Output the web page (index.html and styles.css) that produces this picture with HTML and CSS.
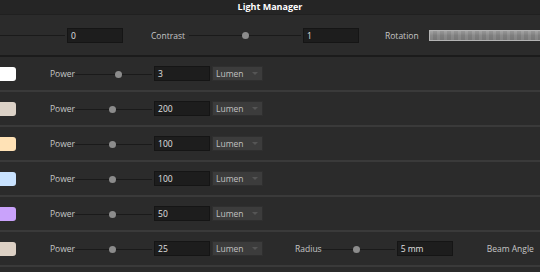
FILE: index.html
```html
<!DOCTYPE html>
<html lang="en">
  <head>
    <meta charset="UTF-8" />
    <title>Light Manager</title>
    <link rel="stylesheet" href="styles.css">
  </head>
  <body>
    <div class="panel">
      <div class="header">Light Manager</div>
      <div class="global-row">
        <div class="slider lead"><span class="track"></span></div>
        <div class="field wide">0</div>
        <span class="label contrast">Contrast</span>
        <div class="slider contrast-slider"><span class="track"></span><span class="thumb" style="left: 53px"></span></div>
        <div class="field wide">1</div>
        <span class="label rotation">Rotation</span>
        <div class="rotation-bar"></div>
      </div>
      <div class="lights">
        <div class="light-row">
          <span class="swatch" style="background: #ffffff"></span>
          <span class="label power">Power</span>
          <div class="slider power-slider"><span class="track"></span><span class="thumb" style="left: 40px"></span></div>
          <div class="field">3</div>
          <div class="unit">Lumen</div>
        </div>
        <div class="light-row">
          <span class="swatch" style="background: #dcd2c7"></span>
          <span class="label power">Power</span>
          <div class="slider power-slider"><span class="track"></span><span class="thumb" style="left: 34px"></span></div>
          <div class="field">200</div>
          <div class="unit">Lumen</div>
        </div>
        <div class="light-row">
          <span class="swatch" style="background: #ffe2b6"></span>
          <span class="label power">Power</span>
          <div class="slider power-slider"><span class="track"></span><span class="thumb" style="left: 34px"></span></div>
          <div class="field">100</div>
          <div class="unit">Lumen</div>
        </div>
        <div class="light-row">
          <span class="swatch" style="background: #c9e2ff"></span>
          <span class="label power">Power</span>
          <div class="slider power-slider"><span class="track"></span><span class="thumb" style="left: 34px"></span></div>
          <div class="field">100</div>
          <div class="unit">Lumen</div>
        </div>
        <div class="light-row">
          <span class="swatch" style="background: #c9a2fb"></span>
          <span class="label power">Power</span>
          <div class="slider power-slider"><span class="track"></span><span class="thumb" style="left: 34px"></span></div>
          <div class="field">50</div>
          <div class="unit">Lumen</div>
        </div>
        <div class="light-row">
          <span class="swatch" style="background: #dcd0c4"></span>
          <span class="label power">Power</span>
          <div class="slider power-slider"><span class="track"></span><span class="thumb" style="left: 34px"></span></div>
          <div class="field">25</div>
          <div class="unit">Lumen</div>
          <span class="label radius">Radius</span>
          <div class="slider radius-slider"><span class="track"></span><span class="thumb" style="left: 31px"></span></div>
          <div class="field">5 mm</div>
          <span class="label beam">Beam Angle</span>
        </div>
      </div>
    </div>
  </body>
</html>
```

FILE: styles.css
```css
body {
  margin: 0;
  background: #2b2b2b;
  font-family: "Open Sans", "Noto Sans", sans-serif;
  font-size: 8.5px;
  color: #c6c6c6;
  overflow: hidden;
}
.panel {
  width: 540px;
  height: 272px;
  overflow: hidden;
}
.header {
  height: 14px;
  line-height: 14px;
  background: #252525;
  border-bottom: 1px solid #202020;
  text-align: center;
  color: #ffffff;
  font-weight: bold;
  font-size: 9px;
}
.global-row {
  display: flex;
  align-items: center;
  height: 40px;
  background: #2b2b2b;
  border-bottom: 2px solid #1b1b1b;
  white-space: nowrap;
}
.label {
  flex: none;
}
.slider {
  position: relative;
  height: 10px;
  flex: none;
}
.track {
  position: absolute;
  left: 0;
  right: 0;
  top: 5px;
  height: 1px;
  background: #1a1a1a;
}
.thumb {
  position: absolute;
  top: 2px;
  width: 7px;
  height: 7px;
  border-radius: 50%;
  background: #8c8c8c;
}
.field {
  flex: none;
  box-sizing: border-box;
  width: 56px;
  height: 15px;
  line-height: 13px;
  padding-left: 3px;
  background: #1d1d1d;
  border: 1px solid #151515;
  color: #e0e0e0;
}
.lead {
  width: 65px;
  margin-right: 2px;
}
.contrast {
  margin-left: 28px;
}
.contrast-slider {
  width: 112px;
  margin-left: 4px;
  margin-right: 2px;
}
.rotation {
  margin-left: 26px;
}
.rotation-bar {
  flex: none;
  width: 112px;
  height: 9px;
  margin-left: 10px;
  border: 1px solid #b4b4b4;
  background:
    repeating-linear-gradient(90deg, rgba(255,255,255,0.05) 0 3px, rgba(0,0,0,0.05) 3px 7px),
    linear-gradient(#a0a0a0, #858585 50%, #7c7c7c);
}
.light-row {
  display: flex;
  align-items: center;
  height: 33px;
  border-bottom: 2px solid #3a3a3a;
  white-space: nowrap;
}
.swatch {
  flex: none;
  width: 20px;
  height: 14px;
  margin-left: -4px;
  border-radius: 3px;
}
.power {
  margin-left: 34px;
}
.power-slider {
  width: 77px;
  margin-right: 2px;
}
.unit {
  flex: none;
  box-sizing: border-box;
  width: 51px;
  height: 15px;
  line-height: 13px;
  margin-left: 2px;
  padding-left: 3px;
  background: #3c3c3c;
  border: 1px solid #2f2f2f;
  color: #c0c0c0;
  position: relative;
}
.unit::after {
  content: "";
  position: absolute;
  right: 4px;
  top: 5px;
  border-left: 3px solid transparent;
  border-right: 3px solid transparent;
  border-top: 3px solid #555;
}
.radius {
  margin-left: 32px;
}
.radius-slider {
  width: 73px;
  margin-right: 2px;
}
.beam {
  margin-left: 34px;
}
```
